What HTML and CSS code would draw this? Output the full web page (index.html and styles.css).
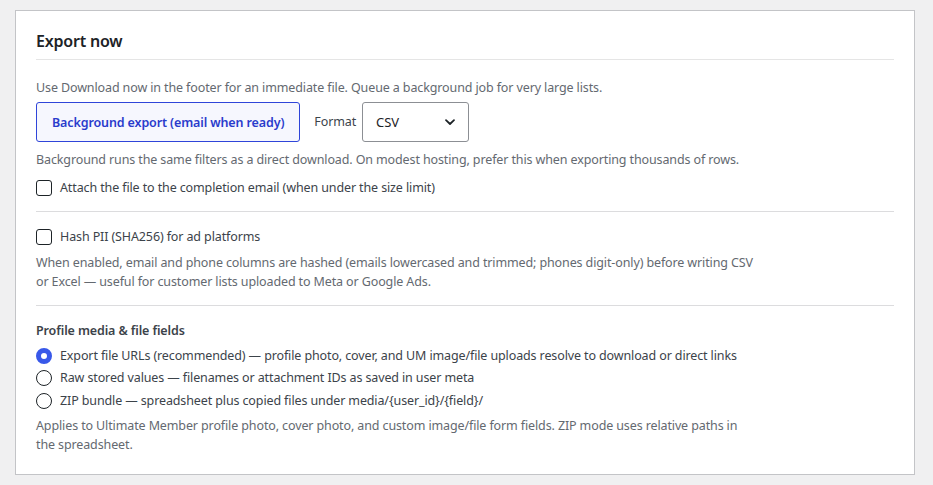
FILE: index.html
```html
<!DOCTYPE html>
<html lang="en">
<head>
<meta charset="utf-8">
<title>Export now</title>
<link rel="stylesheet" href="styles.css">
</head>
<body>
<section class="card">
  <h2 class="card-title">Export now</h2>

  <p class="lead">Use Download now in the footer for an immediate file. Queue a background job for very large lists.</p>
  <div class="action-row">
    <button class="btn-bg" type="button">Background export (email when ready)</button>
    <label class="format-label">Format</label>
    <div class="select">
      <span>CSV</span>
      <svg width="14" height="14" viewBox="0 0 14 14" aria-hidden="true"><path d="M3 5.2 L7 9 L11 5.2" fill="none" stroke="#1d2327" stroke-width="1.8" stroke-linecap="round" stroke-linejoin="round"/></svg>
    </div>
  </div>
  <p class="desc after-row">Background runs the same filters as a direct download. On modest hosting, prefer this when exporting thousands of rows.</p>
  <label class="check-row first-check"><span class="box"></span><span>Attach the file to the completion email (when under the size limit)</span></label>

  <hr class="sep">

  <label class="check-row"><span class="box"></span><span>Hash PII (SHA256) for ad platforms</span></label>
  <p class="desc narrow hash-desc">When enabled, email and phone columns are hashed (emails lowercased and trimmed; phones digit-only) before writing CSV or Excel — useful for customer lists uploaded to Meta or Google Ads.</p>

  <hr class="sep">

  <h3 class="group-title">Profile media &amp; file fields</h3>
  <div class="radios">
    <label class="radio-row"><span class="dot checked"></span><span>Export file URLs (recommended) — profile photo, cover, and UM image/file uploads resolve to download or direct links</span></label>
    <label class="radio-row"><span class="dot"></span><span>Raw stored values — filenames or attachment IDs as saved in user meta</span></label>
    <label class="radio-row"><span class="dot"></span><span>ZIP bundle — spreadsheet plus copied files under media/{user_id}/{field}/</span></label>
  </div>
  <p class="desc narrow media-desc">Applies to Ultimate Member profile photo, cover photo, and custom image/file form fields. ZIP mode uses relative paths in the spreadsheet.</p>
</section>
</body>
</html>
```

FILE: styles.css
```css
html, body {
  margin: 0;
  padding: 0;
  background: #f0f0f1;
}
body {
  padding: 10px 18px 12px 15px;
  font-family: "Noto Sans", "Open Sans", sans-serif;
  font-size: 12.5px;
  letter-spacing: -0.12px;
  line-height: 18px;
  color: #3c434a;
}
.card {
  background: #fff;
  border: 1px solid #c3c4c7;
  padding: 18px 20px 20px;
}
.card-title {
  margin: 0;
  padding-bottom: 6px;
  border-bottom: 1px solid #e5e5e5;
  font-size: 16px;
  letter-spacing: -0.2px;
  line-height: 24px;
  font-weight: 600;
  color: #1d2327;
}
p { margin: 0; }
.lead {
  margin-top: 19px;
  color: #646970;
}
.action-row {
  display: flex;
  align-items: center;
  margin-top: 5px;
}
.btn-bg {
  height: 40px;
  padding: 0 15px;
  border: 1px solid #2f45d9;
  border-radius: 3px;
  background: #f6f7fe;
  color: #2a3ccc;
  font-family: inherit;
  font-size: 12.5px;
  letter-spacing: -0.12px;
  font-weight: 600;
}
.format-label {
  margin-left: 14px;
  margin-right: 6px;
  color: #3c434a;
}
.select {
  box-sizing: border-box;
  width: 107px;
  height: 40px;
  padding: 0 11px 0 13px;
  border: 1px solid #8c8f94;
  border-radius: 3px;
  display: flex;
  align-items: center;
  justify-content: space-between;
  color: #1d2327;
  font-size: 13px;
}
.desc { color: #646970; }
.after-row { margin-top: 9px; }
.check-row {
  display: flex;
  align-items: center;
  gap: 8px;
  color: #3c434a;
}
.first-check { margin-top: 10px; }
.box {
  box-sizing: border-box;
  width: 16px;
  height: 16px;
  border: 1px solid #1d2327;
  border-radius: 3px;
  flex: none;
}
.sep {
  margin: 14px 0 16px;
  border: 0;
  border-top: 1px solid #dcdcde;
  height: 0;
}
.narrow { max-width: 720px; }
.hash-desc {
  margin-top: 7px;
  line-height: 19px;
}
.group-title {
  margin: 0;
  font-size: 12.5px;
  line-height: 18px;
  font-weight: 600;
  color: #3c434a;
}
.radios {
  display: flex;
  flex-direction: column;
  gap: 4.5px;
  margin-top: 6.5px;
}
.radio-row {
  display: flex;
  align-items: center;
  gap: 8px;
}
.dot {
  box-sizing: border-box;
  width: 16px;
  height: 16px;
  border: 1px solid #1d2327;
  border-radius: 50%;
  flex: none;
}
.dot.checked {
  border: 5px solid #3858e9;
}
.media-desc {
  margin-top: 6px;
  line-height: 19px;
}
```
